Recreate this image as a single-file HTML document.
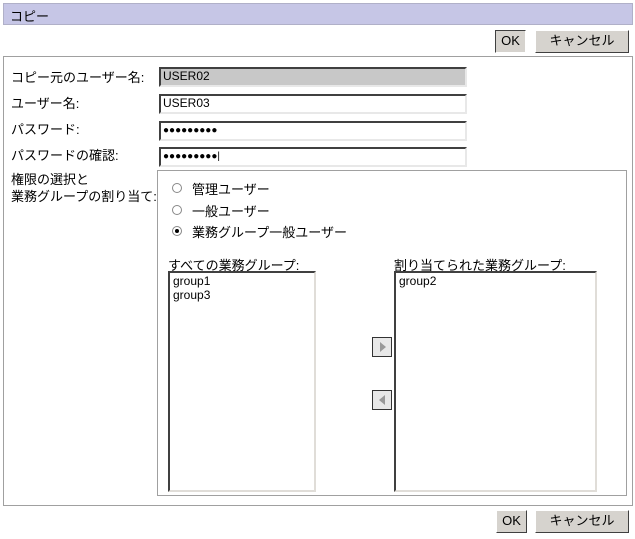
<!DOCTYPE html>
<html><head><meta charset="utf-8"><style>
*{box-sizing:border-box}
body{margin:0;width:635px;height:539px;background:#fff;font-family:"Liberation Sans","Noto Sans CJK JP",sans-serif;font-size:13px;color:#000;position:relative;overflow:hidden}
.a{position:absolute}
.title{left:3px;top:3px;width:630px;height:22px;background:#c6c6e6;border:1px solid #b0b0c8;padding:2px 6px;font-size:13px}
.btn{position:absolute;height:23px;background:#d6d3ce;border:1px solid;border-color:#fff #404040 #404040 #fff;text-align:center;line-height:20px;font-size:13px}
.box{position:absolute;border:1px solid #a0a0a0}
.inp{position:absolute;height:20px;border:2px solid;border-color:#404040 #e8e8e8 #e8e8e8 #404040;padding-left:2px;line-height:15px;font-size:12px;background:#fff}
.lbl{position:absolute;left:11px;font-size:13px}
.rad{position:absolute;left:172px;width:10px;height:10px;border-radius:50%;border:1px solid #888;background:#fff}
.list{position:absolute;border:2px solid;border-color:#404040 #e0ddd8 #e0ddd8 #404040;background:#fff;padding:1px 3px;font-size:12px;line-height:14px}
.arr{position:absolute;left:372px;width:20px;height:20px;border:1px solid #333;background:#e8e8e8}
</style></head><body>
<div class="a title">コピー</div>
<div class="btn" style="left:495px;top:30px;width:31px;border-color:#404040 #fff #fff #404040">OK</div>
<div class="btn" style="left:535px;top:30px;width:94px">キャンセル</div>
<div class="box" style="left:3px;top:56px;width:630px;height:450px"></div>
<div class="lbl" style="top:67px">コピー元のユーザー名:</div>
<div class="inp" style="left:159px;top:67px;width:308px;background:#c8c8c8">USER02</div>
<div class="lbl" style="top:93px">ユーザー名:</div>
<div class="inp" style="left:159px;top:94px;width:308px">USER03</div>
<div class="lbl" style="top:119px">パスワード:</div>
<div class="inp" style="left:159px;top:121px;width:308px;font-size:10px">●●●●●●●●●</div>
<div class="lbl" style="top:145px">パスワードの確認:</div>
<div class="inp" style="left:159px;top:147px;width:308px;font-size:10px">●●●●●●●●●|</div>
<div class="lbl" style="top:171px;line-height:17px">権限の選択と<br>業務グループの割り当て:</div>
<div class="box" style="left:157px;top:170px;width:470px;height:326px"></div>
<div class="rad" style="top:183px"></div><div class="a" style="left:192px;top:179px">管理ユーザー</div>
<div class="rad" style="top:205px"></div><div class="a" style="left:192px;top:201px">一般ユーザー</div>
<div class="rad" style="top:226px"><div style="position:absolute;left:2px;top:2px;width:4px;height:4px;border-radius:50%;background:#000"></div></div><div class="a" style="left:192px;top:222px">業務グループ一般ユーザー</div>
<div class="a" style="left:168px;top:255px">すべての業務グループ:</div>
<div class="a" style="left:394px;top:255px">割り当てられた業務グループ:</div>
<div class="list" style="left:168px;top:271px;width:148px;height:221px">group1<br>group3</div>
<div class="list" style="left:394px;top:271px;width:203px;height:221px">group2</div>
<div class="arr" style="top:337px"><div style="position:absolute;left:7px;top:4px;border-left:6px solid #999;border-top:5px solid transparent;border-bottom:5px solid transparent"></div></div>
<div class="arr" style="top:390px"><div style="position:absolute;left:6px;top:4px;border-right:6px solid #999;border-top:5px solid transparent;border-bottom:5px solid transparent"></div></div>
<div class="btn" style="left:496px;top:510px;width:31px">OK</div>
<div class="btn" style="left:535px;top:510px;width:94px">キャンセル</div>
</body></html>
